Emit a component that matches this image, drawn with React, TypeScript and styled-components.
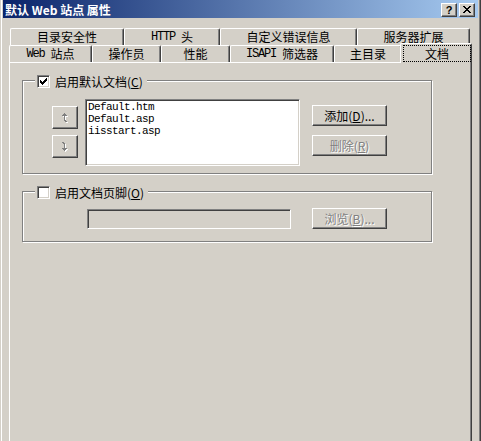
import React from "react";
import styled, { createGlobalStyle } from "styled-components";

const GlobalStyle = createGlobalStyle`
  html, body { margin: 0; padding: 0; background: #d4d0c8; }
  body {
    font-family: "Noto Sans CJK SC", "Noto Sans", sans-serif;
    font-size: 12px;
    color: #000;
  }
  * { box-sizing: border-box; }
`;

const Window = styled.div`
  width: 481px;
  height: 441px;
  overflow: hidden;
  display: flex;
  flex-direction: column;
  background: #d4d0c8;
  padding: 0 3px;
  box-shadow: inset 1px 0 #d4d0c8, inset 2px 0 #fff, inset -1px 0 #404040,
    inset -2px 0 #808080;
`;

const TitleBar = styled.div`
  height: 18px;
  flex: none;
  display: flex;
  align-items: center;
  justify-content: space-between;
  padding: 1px 3px 0 2px;
  background: linear-gradient(to right, #0a246a, #a6caf0);
`;

const TitleText = styled.span`
  color: #fff;
  font-weight: bold;
  font-size: 12px;
  line-height: 17px;
  white-space: pre;
`;

const CaptionButtons = styled.div`
  display: flex;
  gap: 2px;
`;

const raised = `
  background: #d4d0c8;
  border: 1px solid;
  border-color: #fff #404040 #404040 #fff;
  box-shadow: inset -1px -1px 0 #808080, inset 1px 1px 0 #d4d0c8;
`;

const sunken = `
  border: 1px solid;
  border-color: #808080 #fff #fff #808080;
  box-shadow: inset 1px 1px 0 #404040, inset -1px -1px 0 #d4d0c8;
`;

const CaptionButton = styled.div`
  ${raised}
  width: 16px;
  height: 14px;
  display: flex;
  align-items: center;
  justify-content: center;
  font-family: "Liberation Sans", sans-serif;
  font-weight: bold;
  font-size: 11px;
  line-height: 12px;
`;

const Body = styled.div`
  flex: 1;
  display: flex;
  flex-direction: column;
  padding: 10px 6px 0 6px;
`;

const TabRow = styled.div<{ $indent?: number }>`
  display: flex;
  align-items: flex-start;
  height: 17px;
  padding-left: ${(p) => p.$indent ?? 0}px;
`;

const Tab = styled.div<{ $w: number; $active?: boolean }>`
  position: relative;
  width: ${(p) => p.$w}px;
  height: ${(p) => (p.$active ? 20 : 17)}px;
  margin-top: ${(p) => (p.$active ? -2 : 0)}px;
  margin-left: ${(p) => (p.$active ? -2 : 0)}px;
  z-index: ${(p) => (p.$active ? 2 : 0)};
  flex: none;
  background: #d4d0c8;
  border-top: 1px solid #fff;
  border-left: 1px solid #fff;
  border-right: 1px solid #404040;
  box-shadow: inset -1px 0 0 #808080;
  border-radius: 2px 2px 0 0;
  display: flex;
  align-items: ${(p) => (p.$active ? "stretch" : "center")};
  justify-content: center;
  line-height: 14px;
  white-space: pre;
`;

const FocusRing = styled.span`
  flex: 1;
  margin: 1px 0 1px 2px;
  border: 1px dotted #000;
  display: flex;
  align-items: center;
  justify-content: center;
`;

const Mono = styled.span`
  font-family: "Liberation Mono", monospace;
  font-size: 12px;
  letter-spacing: -1.2px;
`;

const Panel = styled.div`
  flex: 1;
  border-top: 1px solid #fff;
  border-left: 1px solid #fff;
  border-right: 1px solid #404040;
  box-shadow: inset -1px 0 0 #808080;
  padding: 17px 0 0 12px;
`;

const Group = styled.div`
  position: relative;
  width: 410px;
  border: 1px solid #808080;
  box-shadow: inset 1px 1px 0 #fff, 1px 1px 0 #fff;
`;

const DocGroup = styled(Group)`
  padding: 18px 0 7px 29px;
`;

const FooterGroup = styled(Group)`
  margin-top: 17px;
  padding: 16px 0 12px 64px;
`;

const Legend = styled.div`
  position: absolute;
  top: -6px;
  left: 12px;
  height: 13px;
  display: flex;
  align-items: center;
  gap: 5px;
  padding: 0 4px 0 2px;
  background: #d4d0c8;
`;

const CheckBox = styled.div`
  ${sunken}
  width: 13px;
  height: 13px;
  background: #fff;
  display: flex;
  align-items: center;
  justify-content: center;
`;

const CheckText = styled.span`
  line-height: 13px;
  white-space: pre;
`;

const Accel = styled.u`
  text-underline-offset: 1px;
`;

const Row = styled.div<{ $center?: boolean }>`
  display: flex;
  align-items: ${(p) => (p.$center ? "center" : "flex-start")};
`;

const ArrowColumn = styled.div`
  display: flex;
  flex-direction: column;
  gap: 6px;
  margin-top: 7px;
`;

const ArrowButton = styled.div`
  ${raised}
  width: 26px;
  height: 23px;
  display: flex;
  align-items: center;
  justify-content: center;
`;

const ListBox = styled.div`
  ${sunken}
  width: 215px;
  height: 67px;
  margin-left: 7px;
  background: #fff;
  padding: 1px 2px;
  font-family: "Liberation Mono", monospace;
  font-size: 11px;
  letter-spacing: -0.6px;
  line-height: 12px;
`;

const ListItem = styled.div`
  height: 12px;
  white-space: pre;
`;

const ButtonColumn = styled.div`
  display: flex;
  flex-direction: column;
  gap: 9px;
  margin-left: 12px;
  margin-top: 6px;
`;

const PushButton = styled.div<{ $disabled?: boolean }>`
  ${raised}
  width: 75px;
  height: 21px;
  display: flex;
  align-items: center;
  justify-content: center;
  line-height: 14px;
  white-space: pre;
  color: ${(p) => (p.$disabled ? "#808080" : "#000")};
  text-shadow: ${(p) => (p.$disabled ? "1px 1px 0 #fff" : "none")};
`;

const TextField = styled.div`
  ${sunken}
  width: 204px;
  height: 20px;
  background: #d4d0c8;
  margin-right: 21px;
`;

type PixelProps = { rows: string[]; color: string; shadow?: string };

const PixelIcon = ({ rows, color, shadow }: PixelProps) => {
  const pts: [number, number][] = [];
  rows.forEach((r, y) =>
    r.split("").forEach((c, x) => {
      if (c === "X") pts.push([x, y]);
    })
  );
  const w = rows[0].length + (shadow ? 1 : 0);
  const h = rows.length + (shadow ? 1 : 0);
  return (
    <svg width={w} height={h} shapeRendering="crispEdges" style={{ display: "block" }}>
      {shadow &&
        pts.map(([x, y]) => (
          <rect key={`s${x}-${y}`} x={x + 1} y={y + 1} width={1} height={1} fill={shadow} />
        ))}
      {pts.map(([x, y]) => (
        <rect key={`c${x}-${y}`} x={x} y={y} width={1} height={1} fill={color} />
      ))}
    </svg>
  );
};

const CHECK = [
  "......X",
  ".....XX",
  "X...XXX",
  "XX.XXX.",
  "XXXXX..",
  ".XXX...",
  "..X....",
];

const CLOSE = [
  "XX....XX",
  ".XX..XX.",
  "..XXXX..",
  "...XX...",
  "..XXXX..",
  ".XX..XX.",
  "XX....XX",
];

const UP = [
  "...X...",
  "..XXX..",
  ".XXXXX.",
  "...X...",
  "...X...",
  "...X...",
  "...X...",
  "...XX..",
  "....XX.",
];

const DOWN = [
  ".XX....",
  "..XX...",
  "...X...",
  "...X...",
  "...X...",
  "...X...",
  ".XXXXX.",
  "..XXX..",
  "...X...",
];

const topTabs: { w: number; label: React.ReactNode }[] = [
  { w: 114, label: "目录安全性" },
  { w: 96, label: <><Mono>HTTP </Mono>头</> },
  { w: 137, label: "自定义错误信息" },
  { w: 113, label: "服务器扩展" },
];

const frontTabs: { w: number; label: React.ReactNode; active?: boolean }[] = [
  { w: 83, label: <><Mono>Web </Mono>站点</> },
  { w: 69, label: "操作员" },
  { w: 69, label: "性能" },
  { w: 104, label: <><Mono>ISAPI </Mono>筛选器</> },
  { w: 68, label: "主目录" },
  { w: 72, label: "文档", active: true },
];

const files = ["Default.htm", "Default.asp", "iisstart.asp"];

export default function App() {
  return (
    <>
      <GlobalStyle />
      <Window>
        <TitleBar>
          <TitleText>默认 Web 站点 属性</TitleText>
          <CaptionButtons>
            <CaptionButton>?</CaptionButton>
            <CaptionButton>
              <PixelIcon rows={CLOSE} color="#000" />
            </CaptionButton>
          </CaptionButtons>
        </TitleBar>
        <Body>
          <TabRow $indent={1}>
            {topTabs.map((t, i) => (
              <Tab key={i} $w={t.w}>
                {t.label}
              </Tab>
            ))}
          </TabRow>
          <TabRow>
            {frontTabs.map((t, i) => (
              <Tab key={i} $w={t.w} $active={t.active}>
                {t.active ? <FocusRing>{t.label}</FocusRing> : t.label}
              </Tab>
            ))}
          </TabRow>
          <Panel>
            <DocGroup>
              <Legend>
                <CheckBox>
                  <PixelIcon rows={CHECK} color="#000" />
                </CheckBox>
                <CheckText>
                  启用默认文档(<Accel>C</Accel>)
                </CheckText>
              </Legend>
              <Row>
                <ArrowColumn>
                  <ArrowButton>
                    <PixelIcon rows={UP} color="#808080" shadow="#fff" />
                  </ArrowButton>
                  <ArrowButton>
                    <PixelIcon rows={DOWN} color="#808080" shadow="#fff" />
                  </ArrowButton>
                </ArrowColumn>
                <ListBox>
                  {files.map((f) => (
                    <ListItem key={f}>{f}</ListItem>
                  ))}
                </ListBox>
                <ButtonColumn>
                  <PushButton>
                    添加(<Accel>D</Accel>)...
                  </PushButton>
                  <PushButton $disabled>
                    删除(<Accel>R</Accel>)
                  </PushButton>
                </ButtonColumn>
              </Row>
            </DocGroup>
            <FooterGroup>
              <Legend>
                <CheckBox />
                <CheckText>
                  启用文档页脚(<Accel>O</Accel>)
                </CheckText>
              </Legend>
              <Row $center>
                <TextField />
                <PushButton $disabled>
                  浏览(<Accel>B</Accel>)...
                </PushButton>
              </Row>
            </FooterGroup>
          </Panel>
        </Body>
      </Window>
    </>
  );
}
